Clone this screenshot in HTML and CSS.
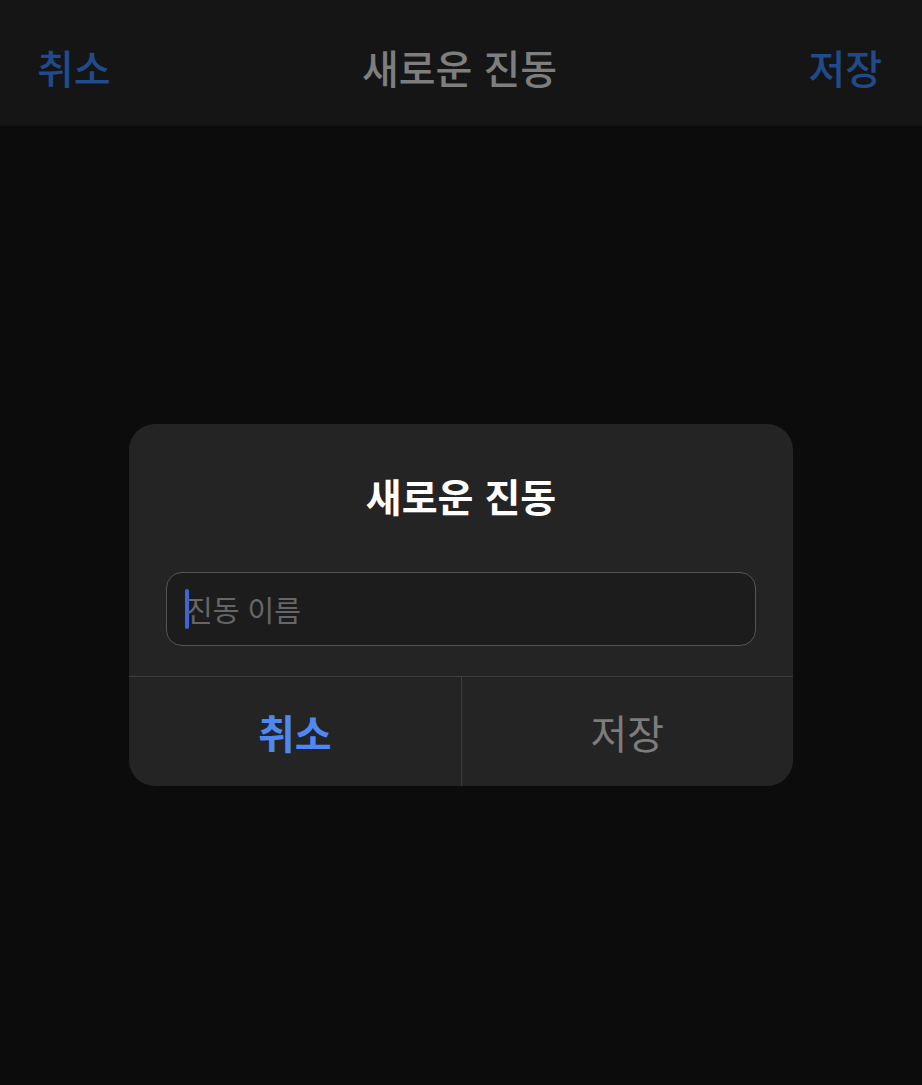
FILE: index.html
```html
<!DOCTYPE html>
<html lang="ko">
<head>
    <meta charset="UTF-8">
    <meta name="viewport" content="width=device-width, initial-scale=1.0">
    <title>새로운 진동</title>
    <link rel="stylesheet" href="styles.css">
</head>
<body>

    <!-- Top navigation bar -->
    <header class="navbar">
        <span class="nav-btn">취소</span>
        <span class="nav-title">새로운 진동</span>
        <span class="nav-btn">저장</span>
    </header>

    <main class="screen">
        <div class="alert">
            <h2 class="alert-title">새로운 진동</h2>

            <div class="field">
                <span class="caret"></span>
                <span class="placeholder">진동 이름</span>
            </div>

            <div class="actions">
                <button type="button" class="action primary">취소</button>
                <button type="button" class="action disabled">저장</button>
            </div>
        </div>
    </main>

</body>
</html>
```

FILE: styles.css
```css
body {
    margin: 0;
    height: 100vh;
    display: flex;
    flex-direction: column;
    background-color: #0c0c0c;
    font-family: "Noto Sans CJK KR", "Noto Sans", sans-serif;
}

.navbar {
    height: 126px;
    display: flex;
    justify-content: space-between;
    align-items: center;
    padding: 8px 40px 0 37px;
    background-color: #151515;
    font-size: 40px;
    box-sizing: border-box;
}

.nav-btn {
    color: #1f4b8c;
    font-weight: 500;
}

.nav-title {
    color: #7e7e7e;
    font-weight: 500;
}

.screen {
    flex: 1;
    display: flex;
    justify-content: center;
    padding-top: 298px;
}

.alert {
    width: 664px;
    height: 362px;
    background-color: #242424;
    border-radius: 26px;
    display: flex;
    flex-direction: column;
    overflow: hidden;
}

.alert-title {
    margin: 44px 0 0;
    height: 55px;
    text-align: center;
    color: #ffffff;
    font-size: 39px;
    font-weight: 700;
    line-height: 55px;
}

.field {
    margin: 49px 37px 0;
    height: 74px;
    box-sizing: border-box;
    border: 1px solid #555555;
    border-radius: 16px;
    background-color: #1c1c1c;
    display: flex;
    align-items: center;
    padding-left: 18px;
}

.caret {
    width: 4px;
    height: 40px;
    border-radius: 2px;
    background-color: #3f63dc;
}

.placeholder {
    color: #666666;
    font-size: 29px;
    margin-left: -3px;
}

.actions {
    margin-top: 30px;
    flex: 1;
    display: flex;
    border-top: 1px solid #3d3d3d;
}

.action {
    flex: 1;
    border: none;
    background: none;
    font-family: inherit;
    font-size: 40px;
    padding: 0;
}

.action + .action {
    border-left: 1px solid #3d3d3d;
}

.primary {
    color: #5088f3;
    font-weight: 700;
}

.disabled {
    color: #7c7c7c;
}
```
